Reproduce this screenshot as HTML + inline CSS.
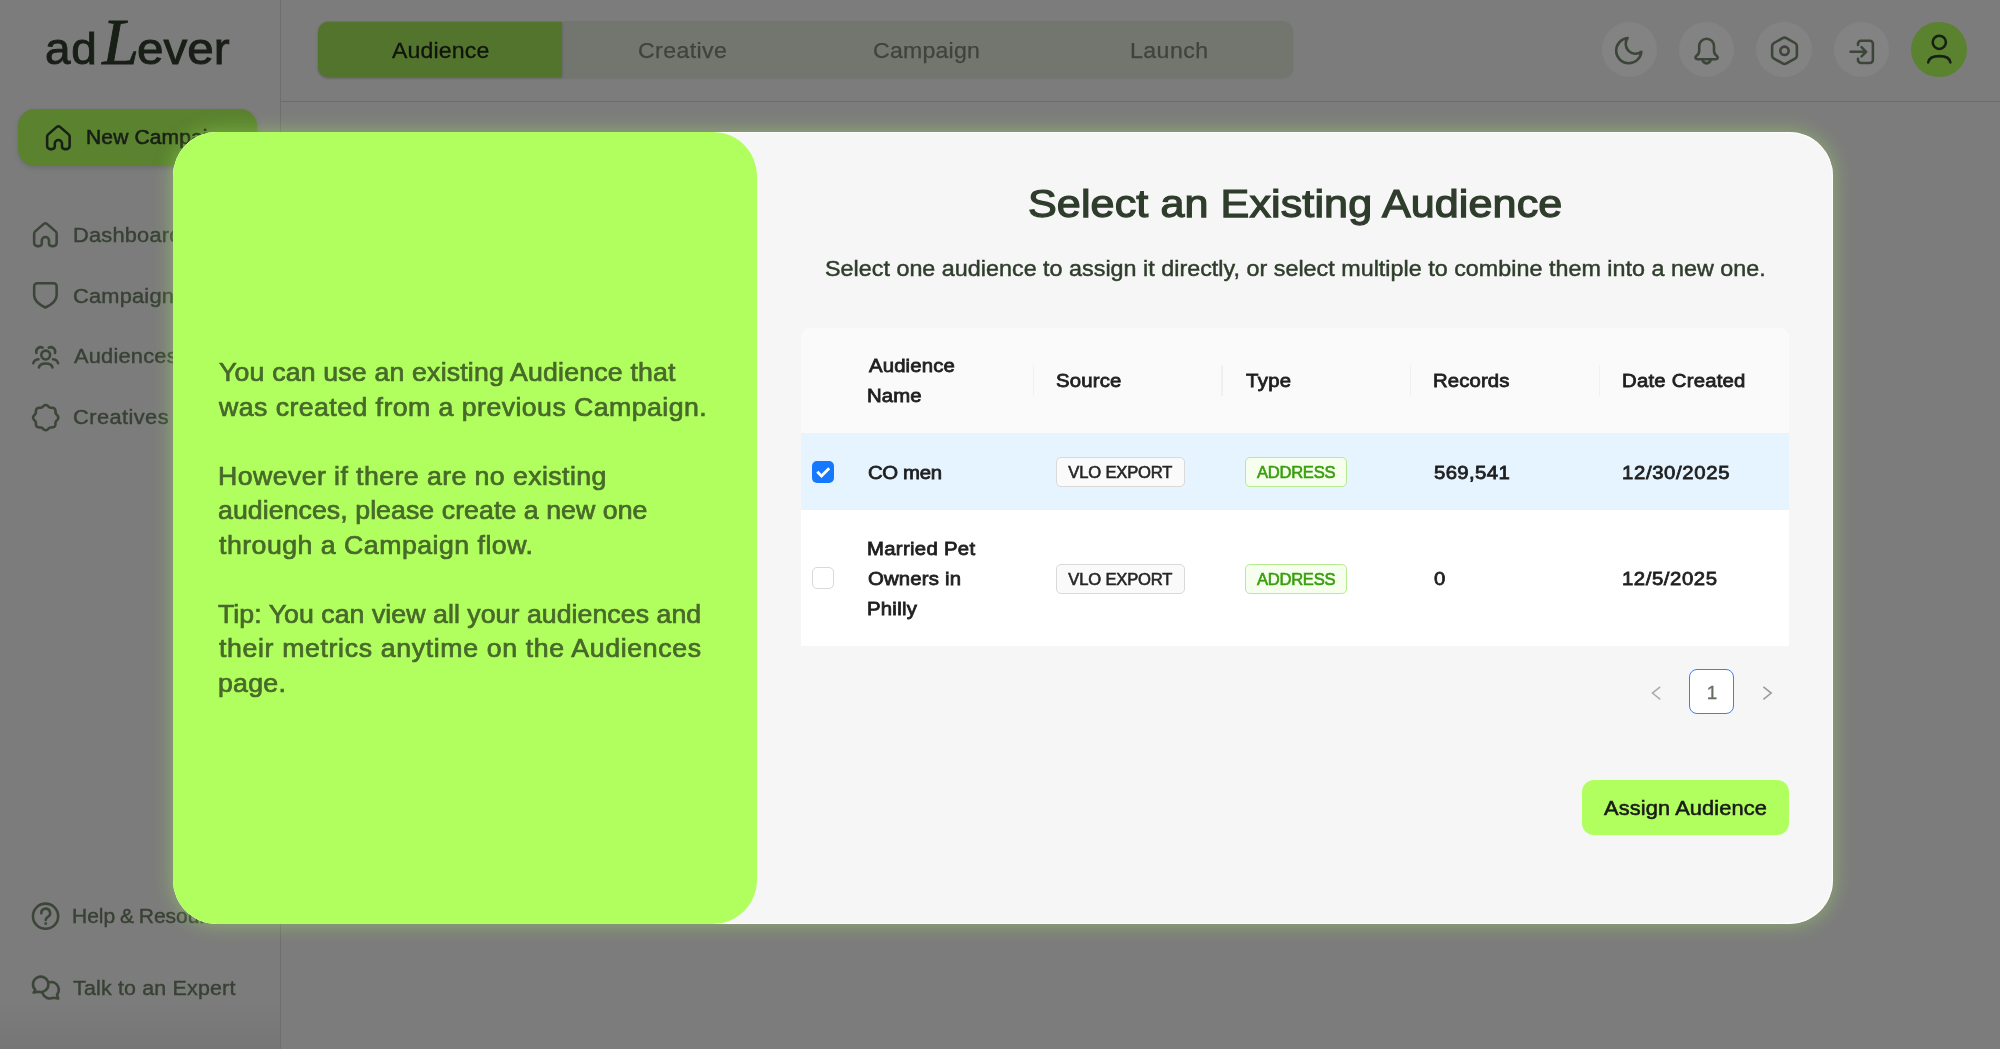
<!DOCTYPE html>
<html lang="en">
<head>
<meta charset="utf-8">
<title>adLever - Select an Existing Audience</title>
<style>
*{box-sizing:border-box;margin:0;padding:0}
html,body{width:2000px;height:1049px;overflow:hidden;background:#7c7c7c}
body{font-family:"Liberation Sans",Arial,sans-serif;position:relative;color:#2f3d2c}
.abs{position:absolute;white-space:nowrap}
.lay{position:absolute;left:0;top:0;width:2000px;height:1049px;will-change:transform}
.box{position:absolute}
svg{display:block;overflow:visible;position:absolute}
/* ---------- dimmed app behind the modal ---------- */
#app{position:absolute;left:0;top:0;width:2000px;height:1049px;background:#7c7c7c}
#sideline{left:279.6px;top:0;width:1.5px;height:1049px;background:#6e6e6e}
#headline{left:281px;top:100.8px;width:1719px;height:1.5px;background:#6c6c6c}
#newc{left:18px;top:109px;width:239px;height:57px;border-radius:17px;background:#5a822f;box-shadow:0 2px 5px rgba(0,0,0,.12)}
.ic path,.ic circle,.ic rect{fill:none;stroke-linecap:round;stroke-linejoin:round}
.nv path,.nv circle{stroke:#3b4538;stroke-width:2.55}
.dk path,.dk circle{stroke:#181f16;stroke-width:2.55}
#tabs{left:318px;top:21.2px;width:975px;height:57px;border-radius:10px;background:#73766f;box-shadow:0 1px 2px rgba(0,0,0,.06)}
#tabon{left:318px;top:21.8px;width:243.6px;height:55.7px;border-radius:10px 0 0 10px;background:#52742d;box-shadow:0 1px 3px rgba(0,0,0,.18)}
.hc{position:absolute;top:22px;width:55.4px;height:55.4px;border-radius:50%;background:#838383}
#ava{background:#5a822f}
/* ---------- modal ---------- */
#modal{position:absolute;left:173.4px;top:131.6px;width:1659.8px;height:792.4px;border-radius:44px;background:#f6f6f6;box-shadow:0 0 20px 1px rgba(177,255,94,.37),inset 0 0 0 1px rgba(255,255,255,.85)}
#left{position:absolute;left:0;top:0;width:583.6px;height:792.4px;border-radius:44px;background:#b1ff5e}
#tbl{left:801px;top:327.5px;width:988px;height:318px;border-radius:10px 10px 0 0;background:#fff;overflow:hidden}
#thead{left:0;top:0;width:988px;height:105.5px;background:#fafafa}
#row1{left:0;top:105.5px;width:988px;height:77px;background:#e6f4ff}
#row2{left:0;top:182.5px;width:988px;height:135.5px;background:#fff}
.sep{position:absolute;top:37px;width:1.3px;height:31px;background:#f0f0f0}
.tag{position:absolute;height:30px;border-radius:5px;border:1.3px solid #d9d9d9;background:#fafafa}
.tag.g{border-color:#b7eb8f;background:#f6ffed}
.cb{position:absolute;width:22px;height:22px;border-radius:5px}
#cb1{left:811.9px;top:460.9px;background:#1677ff;width:22.2px;height:22.2px}
#cb2{left:812px;top:567.3px;background:#fff;border:1.3px solid #d9d9d9}
#pg1{left:1689.1px;top:669px;width:45px;height:45px;border-radius:8px;border:1.7px solid #3a80f7;background:#fff}
#assign{left:1581.5px;top:780px;width:207.5px;height:55.3px;border-radius:12px;background:#b1ff5e}
</style>
</head>
<body>
<div id="app">
  <div class="box" style="left:0;top:1000px;width:280px;height:49px;background:linear-gradient(to bottom,rgba(0,0,0,0),rgba(0,0,0,.05))"></div>
  <div class="box" id="sideline"></div>
  <div class="box" id="headline"></div>
  <div class="box" id="newc"></div>
  <div class="box" id="tabs"></div>
  <div class="box" id="tabon"></div>
  
<div class="hc" style="left:1601.7px"></div><div class="hc" style="left:1679px"></div><div class="hc" style="left:1756.4px"></div><div class="hc" style="left:1833.7px"></div><div class="hc" id="ava" style="left:1911.4px"></div>
<svg class="ic nv" style="left:0;top:0" width="2000" height="100" viewBox="0 0 2000 100">
<path transform="translate(1611.9 33.9) scale(1.4)" style="stroke-width:1.82" d="M21 12.79A9 9 0 1 1 11.21 3 7 7 0 0 0 21 12.79z"/>
<path d="M1699.2 46.1 a7.4 7.4 0 0 1 14.8 0 V51 c0 2.3 1.2 3.7 2.9 5 c1.6 1.3 .8 3.2 -1.3 3.2 H1697.6 c-2.1 0 -2.9 -1.9 -1.3 -3.2 c1.7 -1.3 2.9 -2.7 2.9 -5 Z"/>
<path d="M1702.4 59.6 c.5 2.4 2.1 3.8 4.2 3.8 s3.7 -1.4 4.2 -3.8"/>
<path d="M1782.6 38.2 Q1784.5 37.1 1786.4 38.2 L1795 43 Q1796.9 44.1 1796.9 46.2 V55.4 Q1796.9 57.5 1795 58.6 L1786.4 63.4 Q1784.5 64.5 1782.6 63.4 L1774 58.6 Q1772.1 57.5 1772.1 55.4 V46.2 Q1772.1 44.1 1774 43 Z"/>
<circle cx="1784.5" cy="50.8" r="4.2"/>
<path d="M1858 45 V43.8 a3 3 0 0 1 3-3 H1869.9 a3 3 0 0 1 3 3 V59.9 a3 3 0 0 1 -3 3 H1861 a3 3 0 0 1 -3-3 V58.7"/>
<path d="M1850.6 51.8 H1865.8 M1861.5 47.2 L1866.1 51.8 L1861.5 56.4"/>
</svg>
<svg class="ic dk" style="left:0;top:0" width="2000" height="100" viewBox="0 0 2000 100"><circle cx="1939.3" cy="42.3" r="6.6"/><path d="M1928.2 62.4 c.6-3.9 4.5-6.3 11.1-6.3 s10.5 2.4 11.1 6.3"/></svg>

<svg class="ic dk" style="left:45.5px;top:125.3px" width="25" height="26" viewBox="0 0 25 26"><path d="M8.8 21.3 V18.6 A3.6 3.6 0 0 1 16 18.6 V21.3 A2.8 2.8 0 0 0 18.8 24.1 H20.6 A3.05 3.05 0 0 0 23.65 21.05 V11.6 Q23.65 10.3 22.6 9.4 L14 1.9 Q12.4 0.6 10.8 1.9 L2.2 9.4 Q1.15 10.3 1.15 11.6 V21.05 A3.05 3.05 0 0 0 4.2 24.1 H6 A2.8 2.8 0 0 0 8.8 21.3 Z"/></svg>
<svg class="ic nv" style="left:33.1px;top:222.1px" width="25" height="26" viewBox="0 0 25 26"><path d="M8.8 21.3 V18.6 A3.6 3.6 0 0 1 16 18.6 V21.3 A2.8 2.8 0 0 0 18.8 24.1 H20.6 A3.05 3.05 0 0 0 23.65 21.05 V11.6 Q23.65 10.3 22.6 9.4 L14 1.9 Q12.4 0.6 10.8 1.9 L2.2 9.4 Q1.15 10.3 1.15 11.6 V21.05 A3.05 3.05 0 0 0 4.2 24.1 H6 A2.8 2.8 0 0 0 8.8 21.3 Z"/></svg>
<svg class="ic nv" style="left:33.1px;top:282.2px" width="25" height="27" viewBox="0 0 25 27"><path d="M4.15 1.15 H20.65 A3 3 0 0 1 23.65 4.15 V13.2 C23.65 18.6 18.6 22.6 12.4 25.5 C6.2 22.6 1.15 18.6 1.15 13.2 V4.15 A3 3 0 0 1 4.15 1.15 Z"/></svg>
<svg class="ic nv" style="left:31.9px;top:345px" width="28" height="24" viewBox="0 0 28 24"><circle cx="13.7" cy="10" r="4.4"/><path d="M6.9 22.5 C7.5 19.6 10.3 18.5 13.7 18.5 C17.1 18.5 19.9 19.6 20.5 22.5"/><path d="M4.4 7.9 A4.5 4.5 0 0 1 10.6 2.6"/><path d="M16.8 2.6 A4.5 4.5 0 0 1 23 7.9"/><path d="M1.3 18.3 C1.9 15.9 3.9 14.5 6.4 14.3"/><path d="M26.1 18.3 C25.5 15.9 23.5 14.5 21 14.3"/></svg>
<svg class="ic nv" style="left:31.9px;top:403.6px" width="28" height="28" viewBox="0 0 28 28"><path d="M13.70 1.00 L14.36 1.09 L14.99 1.35 L15.58 1.74 L16.12 2.19 L16.63 2.66 L17.12 3.08 L17.61 3.41 L18.14 3.63 L18.72 3.74 L19.36 3.79 L20.05 3.82 L20.76 3.88 L21.45 4.03 L22.08 4.29 L22.61 4.69 L23.01 5.22 L23.27 5.85 L23.42 6.54 L23.48 7.25 L23.51 7.94 L23.56 8.58 L23.67 9.16 L23.89 9.69 L24.22 10.18 L24.64 10.67 L25.11 11.18 L25.56 11.72 L25.95 12.31 L26.21 12.94 L26.30 13.60 L26.21 14.26 L25.95 14.89 L25.56 15.48 L25.11 16.02 L24.64 16.53 L24.22 17.02 L23.89 17.51 L23.67 18.04 L23.56 18.62 L23.51 19.26 L23.48 19.95 L23.42 20.66 L23.27 21.35 L23.01 21.98 L22.61 22.51 L22.08 22.91 L21.45 23.17 L20.76 23.32 L20.05 23.38 L19.36 23.41 L18.72 23.46 L18.14 23.57 L17.61 23.79 L17.12 24.12 L16.63 24.54 L16.12 25.01 L15.58 25.46 L14.99 25.85 L14.36 26.11 L13.70 26.20 L13.04 26.11 L12.41 25.85 L11.82 25.46 L11.28 25.01 L10.77 24.54 L10.28 24.12 L9.79 23.79 L9.26 23.57 L8.68 23.46 L8.04 23.41 L7.35 23.38 L6.64 23.32 L5.95 23.17 L5.32 22.91 L4.79 22.51 L4.39 21.98 L4.13 21.35 L3.98 20.66 L3.92 19.95 L3.89 19.26 L3.84 18.62 L3.73 18.04 L3.51 17.51 L3.18 17.02 L2.76 16.53 L2.29 16.02 L1.84 15.48 L1.45 14.89 L1.19 14.26 L1.10 13.60 L1.19 12.94 L1.45 12.31 L1.84 11.72 L2.29 11.18 L2.76 10.67 L3.18 10.18 L3.51 9.69 L3.73 9.16 L3.84 8.58 L3.89 7.94 L3.92 7.25 L3.98 6.54 L4.13 5.85 L4.39 5.22 L4.79 4.69 L5.32 4.29 L5.95 4.03 L6.64 3.88 L7.35 3.82 L8.04 3.79 L8.68 3.74 L9.26 3.63 L9.79 3.41 L10.28 3.08 L10.77 2.66 L11.28 2.19 L11.82 1.74 L12.41 1.35 L13.04 1.09Z"/></svg>
<svg class="ic nv" style="left:0;top:0" width="100" height="1049" viewBox="0 0 100 1049"><circle cx="45.55" cy="916.2" r="12.6"/><path d="M41.3 913.3 A4.4 4.4 0 1 1 47.9 916.9 C46.3 917.9 45.7 918.5 45.7 919.9"/><circle cx="45.7" cy="923.5" r="0.55" style="stroke-width:1.9"/>
<path d="M35.3 989.9 A7.7 7.7 0 1 1 38.6 991.8 L33.6 992.6 Z"/>
<path d="M49.84 982.16 A7.7 7.7 0 0 1 57.0 994.6 L58.2 998.6 L53.4 997.7 A7.7 7.7 0 0 1 42.66 993.54"/></svg>

<div class="lay">
<div class="abs" style="left:44.80px;top:25.71px;font-size:45px;line-height:45px;color:#181f16;letter-spacing:0.686px;-webkit-text-stroke:0.9px #181f16;transform:scaleX(1.02);transform-origin:0 0;">ad</div>
<div class="abs" style="left:102.25px;top:8.52px;font-size:66px;line-height:66px;color:#181f16;font-family:'Liberation Serif','Times New Roman',serif;-webkit-text-stroke:0.9px #181f16;font-style:italic;">L</div>
<div class="abs" style="left:136.50px;top:25.71px;font-size:45px;line-height:45px;color:#181f16;letter-spacing:-0.063px;-webkit-text-stroke:0.9px #181f16;transform:scaleX(1.06);transform-origin:0 0;">ever</div>
<div class="abs" style="left:85.50px;top:127.79px;font-size:19.5px;line-height:19.5px;color:#181f16;letter-spacing:0.100px;-webkit-text-stroke:0.55px #181f16;transform:scaleX(1.08);transform-origin:0 0;">New Campaign</div>
<div class="abs" style="left:73.10px;top:225.07px;font-size:20px;line-height:20px;color:#374134;letter-spacing:0.200px;-webkit-text-stroke:0.4px #374134;transform:scaleX(1.09);transform-origin:0 0;">Dashboard</div>
<div class="abs" style="left:72.80px;top:285.57px;font-size:20px;line-height:20px;color:#374134;letter-spacing:0.200px;-webkit-text-stroke:0.4px #374134;transform:scaleX(1.09);transform-origin:0 0;">Campaigns</div>
<div class="abs" style="left:74.05px;top:346.07px;font-size:20px;line-height:20px;color:#374134;letter-spacing:0.200px;-webkit-text-stroke:0.4px #374134;transform:scaleX(1.09);transform-origin:0 0;">Audiences</div>
<div class="abs" style="left:72.80px;top:407.07px;font-size:20px;line-height:20px;color:#374134;letter-spacing:0.401px;-webkit-text-stroke:0.4px #374134;transform:scaleX(1.09);transform-origin:0 0;">Creatives</div>
<div class="abs" style="left:72.10px;top:906.07px;font-size:20px;line-height:20px;color:#374134;-webkit-text-stroke:0.4px #374134;transform:scaleX(1.05);transform-origin:0 0;word-spacing:-1px;">Help &amp; Resources</div>
<div class="abs" style="left:73.35px;top:978.17px;font-size:20px;line-height:20px;color:#374134;letter-spacing:0.172px;-webkit-text-stroke:0.4px #374134;transform:scaleX(1.07);transform-origin:0 0;">Talk to an Expert</div>
<div class="abs" style="left:391.60px;top:40.02px;font-size:21.6px;line-height:21.6px;color:#10140d;letter-spacing:0.120px;-webkit-text-stroke:0.3px #10140d;transform:scaleX(1.07);transform-origin:0 0;">Audience</div>
<div class="abs" style="left:638.40px;top:40.02px;font-size:21.6px;line-height:21.6px;color:#3e433b;letter-spacing:0.367px;-webkit-text-stroke:0.25px #3e433b;transform:scaleX(1.07);transform-origin:0 0;">Creative</div>
<div class="abs" style="left:873.20px;top:40.02px;font-size:21.6px;line-height:21.6px;color:#3e433b;letter-spacing:0.200px;-webkit-text-stroke:0.25px #3e433b;transform:scaleX(1.07);transform-origin:0 0;">Campaign</div>
<div class="abs" style="left:1130.45px;top:40.02px;font-size:21.6px;line-height:21.6px;color:#3e433b;letter-spacing:0.421px;-webkit-text-stroke:0.25px #3e433b;transform:scaleX(1.07);transform-origin:0 0;">Launch</div>
</div>
</div>
<div id="modal">
  <div id="left"></div>
</div>
<div class="box" id="tbl">
  <div class="box" id="thead">
    <div class="sep" style="left:231.5px"></div>
    <div class="sep" style="left:420.3px"></div>
    <div class="sep" style="left:609.2px"></div>
    <div class="sep" style="left:798px"></div>
  </div>
  <div class="box" id="row1"></div>
  <div class="box" id="row2"></div>
</div>
<div class="cb" id="cb1"><svg width="22" height="22" viewBox="0 0 22 22"><path d="M5.3 10.8 L9.5 15 L17.2 7.3" fill="none" stroke="#fff" stroke-width="2.8" stroke-linecap="butt" stroke-linejoin="miter"/></svg></div>
<div class="cb" id="cb2"></div>
<div class="tag" style="left:1056px;top:457px;width:129px"></div>
<div class="tag g" style="left:1245px;top:457px;width:101.5px"></div>
<div class="tag" style="left:1056px;top:564.3px;width:129px"></div>
<div class="tag g" style="left:1245px;top:564.3px;width:101.5px"></div>
<div class="box" id="pg1"></div>
<svg style="left:1650px;top:685px" width="12" height="16" viewBox="0 0 12 16"><path d="M10.2 1.8 L2.4 8.05 L10.2 14.3" fill="none" stroke="#ababab" stroke-width="1.5"/></svg>
<svg style="left:1761px;top:685px" width="12" height="16" viewBox="0 0 12 16"><path d="M2.4 1.8 L10.2 8.05 L2.4 14.3" fill="none" stroke="#999" stroke-width="1.5"/></svg>
<div class="box" id="assign"></div>
<div class="lay">
<div class="abs" style="left:218.60px;top:359.72px;font-size:25.2px;line-height:25.2px;color:#47692a;letter-spacing:0.162px;-webkit-text-stroke:0.7px #47692a;transform:scaleX(1.06);transform-origin:0 0;">You can use an existing Audience that</div>
<div class="abs" style="left:219.10px;top:394.87px;font-size:25.2px;line-height:25.2px;color:#47692a;letter-spacing:0.413px;-webkit-text-stroke:0.7px #47692a;transform:scaleX(1.06);transform-origin:0 0;">was created from a previous Campaign.</div>
<div class="abs" style="left:217.55px;top:463.87px;font-size:25.2px;line-height:25.2px;color:#47692a;letter-spacing:0.393px;-webkit-text-stroke:0.7px #47692a;transform:scaleX(1.06);transform-origin:0 0;">However if there are no existing</div>
<div class="abs" style="left:217.85px;top:497.77px;font-size:25.2px;line-height:25.2px;color:#47692a;letter-spacing:0.057px;-webkit-text-stroke:0.7px #47692a;transform:scaleX(1.06);transform-origin:0 0;">audiences, please create a new one</div>
<div class="abs" style="left:218.60px;top:532.87px;font-size:25.2px;line-height:25.2px;color:#47692a;letter-spacing:0.457px;-webkit-text-stroke:0.7px #47692a;transform:scaleX(1.06);transform-origin:0 0;">through a Campaign flow.</div>
<div class="abs" style="left:218.35px;top:602.07px;font-size:25.2px;line-height:25.2px;color:#47692a;letter-spacing:0.042px;-webkit-text-stroke:0.7px #47692a;transform:scaleX(1.06);transform-origin:0 0;">Tip: You can view all your audiences and</div>
<div class="abs" style="left:218.60px;top:635.87px;font-size:25.2px;line-height:25.2px;color:#47692a;letter-spacing:0.599px;-webkit-text-stroke:0.7px #47692a;transform:scaleX(1.06);transform-origin:0 0;">their metrics anytime on the Audiences</div>
<div class="abs" style="left:218.05px;top:671.07px;font-size:25.2px;line-height:25.2px;color:#47692a;letter-spacing:0.236px;-webkit-text-stroke:0.7px #47692a;transform:scaleX(1.06);transform-origin:0 0;">page.</div>
<div class="abs" style="left:1027.95px;top:183.82px;font-size:39.2px;line-height:39.2px;color:#2f3d2c;letter-spacing:0.080px;-webkit-text-stroke:1.25px #2f3d2c;transform:scaleX(1.1);transform-origin:0 0;">Select an Existing Audience</div>
<div class="abs" style="left:824.75px;top:258.88px;font-size:21.4px;line-height:21.4px;color:#2f3d2c;letter-spacing:0.015px;-webkit-text-stroke:0.45px #2f3d2c;transform:scaleX(1.09);transform-origin:0 0;">Select one audience to assign it directly, or select multiple to combine them into a new one.</div>
<div class="abs" style="left:868.50px;top:355.92px;font-size:19px;line-height:19px;color:#1f1f1f;letter-spacing:0.134px;-webkit-text-stroke:0.8px #1f1f1f;transform:scaleX(1.07);transform-origin:0 0;">Audience</div>
<div class="abs" style="left:866.75px;top:385.92px;font-size:19px;line-height:19px;color:#1f1f1f;letter-spacing:0.078px;-webkit-text-stroke:0.8px #1f1f1f;transform:scaleX(1.07);transform-origin:0 0;">Name</div>
<div class="abs" style="left:1056.25px;top:370.92px;font-size:19px;line-height:19px;color:#1f1f1f;letter-spacing:0.187px;-webkit-text-stroke:0.8px #1f1f1f;transform:scaleX(1.07);transform-origin:0 0;">Source</div>
<div class="abs" style="left:1245.50px;top:370.92px;font-size:19px;line-height:19px;color:#1f1f1f;letter-spacing:0.312px;-webkit-text-stroke:0.8px #1f1f1f;transform:scaleX(1.07);transform-origin:0 0;">Type</div>
<div class="abs" style="left:1433.25px;top:370.92px;font-size:19px;line-height:19px;color:#1f1f1f;letter-spacing:0.117px;-webkit-text-stroke:0.8px #1f1f1f;transform:scaleX(1.07);transform-origin:0 0;">Records</div>
<div class="abs" style="left:1622.00px;top:370.92px;font-size:19px;line-height:19px;color:#1f1f1f;letter-spacing:0.212px;-webkit-text-stroke:0.8px #1f1f1f;transform:scaleX(1.07);transform-origin:0 0;">Date Created</div>
<div class="abs" style="left:867.50px;top:462.92px;font-size:19px;line-height:19px;color:#1f1f1f;letter-spacing:-0.327px;-webkit-text-stroke:0.8px #1f1f1f;transform:scaleX(1.07);transform-origin:0 0;">CO men</div>
<div class="abs" style="left:1434.25px;top:462.92px;font-size:19px;line-height:19px;color:#1f1f1f;letter-spacing:0.350px;-webkit-text-stroke:0.8px #1f1f1f;transform:scaleX(1.07);transform-origin:0 0;">569,541</div>
<div class="abs" style="left:1622.25px;top:462.92px;font-size:19px;line-height:19px;color:#1f1f1f;letter-spacing:0.597px;-webkit-text-stroke:0.8px #1f1f1f;transform:scaleX(1.07);transform-origin:0 0;">12/30/2025</div>
<div class="abs" style="left:866.75px;top:538.92px;font-size:19px;line-height:19px;color:#1f1f1f;letter-spacing:0.280px;-webkit-text-stroke:0.8px #1f1f1f;transform:scaleX(1.07);transform-origin:0 0;">Married Pet</div>
<div class="abs" style="left:867.50px;top:568.92px;font-size:19px;line-height:19px;color:#1f1f1f;letter-spacing:0.175px;-webkit-text-stroke:0.8px #1f1f1f;transform:scaleX(1.07);transform-origin:0 0;">Owners in</div>
<div class="abs" style="left:866.75px;top:598.92px;font-size:19px;line-height:19px;color:#1f1f1f;letter-spacing:0.234px;-webkit-text-stroke:0.8px #1f1f1f;transform:scaleX(1.07);transform-origin:0 0;">Philly</div>
<div class="abs" style="left:1434.25px;top:568.92px;font-size:19px;line-height:19px;color:#1f1f1f;-webkit-text-stroke:0.8px #1f1f1f;transform:scaleX(1.07);transform-origin:0 0;">0</div>
<div class="abs" style="left:1622.25px;top:568.92px;font-size:19px;line-height:19px;color:#1f1f1f;letter-spacing:0.526px;-webkit-text-stroke:0.8px #1f1f1f;transform:scaleX(1.07);transform-origin:0 0;">12/5/2025</div>
<div class="abs" style="left:1068.25px;top:464.95px;font-size:16.6px;line-height:16.6px;color:#262626;letter-spacing:-0.167px;-webkit-text-stroke:0.6px #262626;">VLO EXPORT</div>
<div class="abs" style="left:1068.25px;top:571.95px;font-size:16.6px;line-height:16.6px;color:#262626;letter-spacing:-0.167px;-webkit-text-stroke:0.6px #262626;">VLO EXPORT</div>
<div class="abs" style="left:1257.00px;top:464.95px;font-size:16.6px;line-height:16.6px;color:#389e0d;letter-spacing:-0.292px;-webkit-text-stroke:0.6px #389e0d;">ADDRESS</div>
<div class="abs" style="left:1257.00px;top:571.95px;font-size:16.6px;line-height:16.6px;color:#389e0d;letter-spacing:-0.292px;-webkit-text-stroke:0.6px #389e0d;">ADDRESS</div>
<div class="abs" style="left:1706.65px;top:683.80px;font-size:18.9px;line-height:18.9px;color:#666d63;-webkit-text-stroke:0.3px #666d63;">1</div>
<div class="abs" style="left:1604.15px;top:798.07px;font-size:20px;line-height:20px;color:#1a1a1a;letter-spacing:0.115px;-webkit-text-stroke:0.55px #1a1a1a;transform:scaleX(1.09);transform-origin:0 0;">Assign Audience</div>
</div>
</body>
</html>
